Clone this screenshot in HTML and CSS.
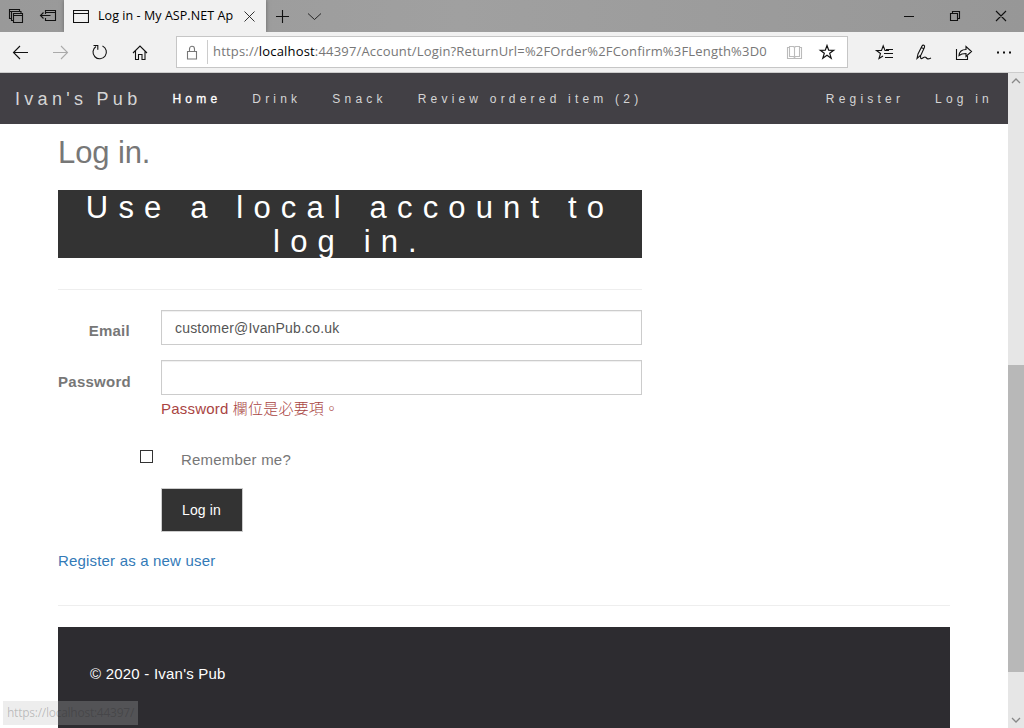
FILE: index.html
```html
<!DOCTYPE html>
<html lang="en">
<head>
<meta charset="utf-8">
<title>Log in - My ASP.NET Application</title>
<link rel="stylesheet" href="styles.css">
</head>
<body>
<div class="window">
  <header class="tabbar">
    <div class="tab-tools">
      <svg width="64" height="32" class="icon"><path d="M11.500 18.500h-2v-9h10v2M9.500 11.500h2M13.500 20.500h-2v-9h9.500v2M13.500 13.500h9v9h-9zM13.500 15.500h9M45.500 14v-3.500h10v10h-10V18M45.500 12.500h10M40.500 15.500h10M43.500 12.500l-3 3 3 3"/></svg>
    </div>
    <div class="tab">
      <svg width="16" height="16" class="icon"><path d="M.5 2.500h15v12H.5zM.5 5.500h15"/></svg>
      <span class="tab-title">Log in - My ASP.NET Ap</span>
      <svg width="11" height="11" class="icon thin"><path d="M.5.5l10 10M10.500.5l-10 10"/></svg>
    </div>
    <svg width="60" height="32" class="icon"><path d="M10 16.500h13M16.500 10v13"/><path class="thin" d="M42 13.500l6.500 6 6.500-6"/></svg>
    <svg width="124" height="32" class="icon controls"><path d="M4 16.500h10M50.500 13.500h7v7h-7zM52.500 13.500v-2h7v7h-2M96 11l10 10M106 11l-10 10"/></svg>
  </header>

  <div class="toolbar">
    <svg width="176" height="40" class="icon nav-icons">
      <path d="M13.500 20.500H28M20 14l-6.500 6.500L20 27"/>
      <path class="disabled" d="M53 20.500h14.500M61 14l6.500 6.500L61 27"/>
      <path d="M102.500 14a6.700 6.700 0 1 1-6.500.5M93.500 13.500h4.300v4.300"/>
      <path d="M133 21l7-7 7 7M135.500 19v8.500h3v-5h3.500v5h3V19"/>
    </svg>
    <div class="address">
      <svg width="30" height="24" class="icon lock"><path d="M10.500 11.500h9v7.500h-9zM12.500 11.500v-2.500a2.500 2.800 0 0 1 5 0v2.500"/></svg>
      <div class="url">https://<b>localhost</b>:44397/Account/Login?ReturnUrl=%2FOrder%2FConfirm%3FLength%3D0</div>
      <svg width="68" height="30" class="icon">
        <path class="reader" d="M9.500 10.500h-2v11h14v-11h-2M9.500 9.500h4l1 1 1-1h4v10h-4l-1 1-1-1h-4zM14.500 10.500v10"/>
        <path class="star" d="M47 8.500l1.700 4.700 5 .1-4 3 1.500 5-4.200-3-4.200 3 1.500-5-4-3 5-.1z"/>
      </svg>
    </div>
    <svg width="160" height="40" class="icon actions">
      <path d="M35 18.500h-4l-1.800-4.700-1.700 4.700h-5l4 3-1.500 5 4-2.500M32 17.500h7M30 21.500h9M31 25.500h8"/>
      <path d="M63 26.500l1-4.500 4-8c1-1.700 3.200-.7 2.500 1.200l-3.500 7.800zM67 15.500l2.500 1M66.500 23c.3 2-.5 4 1.500 3.500 2-.8 2.500-2.500 4-1s1.700 2 5 .5"/>
      <path d="M102.500 17v10.500h11V24M105 23.500c.5-4.500 3-6 7-6v-3l5.500 5-5.500 5v-3c-3 0-5 .3-7 2z"/>
      <path class="dots" d="M143 20.500h2M149 20.500h2M155 20.500h2"/>
    </svg>
  </div>

  <div class="viewport">
    <div class="page">
      <nav class="navbar">
        <a class="brand">Ivan's Pub</a>
        <a class="active">Home</a>
        <a>Drink</a>
        <a>Snack</a>
        <a>Review ordered item (2)</a>
        <a class="register">Register</a>
        <a>Log in</a>
      </nav>
      <main class="container">
        <h2>Log in.</h2>
        <form class="login-form">
          <h4>Use a local account to log in.</h4>
          <hr>
          <div class="field">
            <label for="email">Email</label>
            <input id="email" type="text" value="customer@IvanPub.co.uk">
          </div>
          <div class="field">
            <label for="password">Password</label>
            <input id="password" type="password">
          </div>
          <p class="error">Password <span>欄位是必要項。</span></p>
          <label class="remember"><input type="checkbox">Remember me?</label>
          <button type="button">Log in</button>
        </form>
        <a class="register-link">Register as a new user</a>
        <hr class="footer-rule">
        <footer>© 2020 - Ivan's Pub</footer>
      </main>
    </div>
    <div class="scrollbar">
      <svg width="16" height="16"><path d="M4 10l4-4 4 4"/></svg>
      <div class="thumb"></div>
      <svg width="16" height="16"><path d="M4 6l4 4 4-4"/></svg>
    </div>
  </div>
  <div class="status">https://localhost:44397/</div>
</div>
</body>
</html>
```
FILE: styles.css
```css
* { box-sizing: border-box; }
body { margin: 0; font-family: "Liberation Sans", Arial, sans-serif; }
.window { position: relative; width: 1024px; height: 728px; overflow: hidden; display: flex; flex-direction: column; background: #fff; }
svg { display: block; flex: none; }
.icon { fill: none; stroke: #111; stroke-width: 1.1; }
.icon.thin, .icon .thin { stroke-width: .85; }

/* Browser chrome */
.tabbar { height: 32px; flex: none; display: flex; background: linear-gradient(90deg, #999, #a0a0a0 45%, #979797); }
.tab { width: 202px; height: 32px; padding: 0 11px 0 9px; display: flex; align-items: center; background: #f1f1f1; box-shadow: 0 0 4px #666; }
.tab-title { width: 136px; margin: 0 11px 0 9px; white-space: nowrap; font: 12.5px/20px "Open Sans", sans-serif; letter-spacing: .06px; color: #000; }
.controls { margin-left: auto; }
.toolbar { height: 41px; flex: none; display: flex; align-items: flex-start; background: #f1f1f1; border-bottom: 1px solid #ccc; }
.icon .disabled { stroke: #aaa; }
.address { width: 672px; height: 32px; margin-top: 4px; display: flex; background: #fff; border: 1px solid #c6c6c6; }
.lock { width: 31px; border-right: 1px solid #ccc; margin-top: 3px; stroke: #777; }
.url { flex: none; width: 570px; padding-left: 5px; font: 13px/29px "Open Sans", sans-serif; letter-spacing: .18px; white-space: nowrap; color: #777; }
.url b { font-weight: 400; color: #000; }
.icon .reader { stroke: #bbb; }
.star { stroke-width: 1.2; }
.address svg:last-child { margin-left: 2px; margin-right: -4px; }
.actions { margin-left: 6px; width: 168px; }
.dots { stroke-width: 2; }

/* Web page */
.viewport { flex: 1; min-height: 0; display: flex; }
.page { width: 1008px; }
.navbar { height: 51px; padding: 0 15px 0 15px; display: flex; align-items: center; gap: 31px; background: #424045; }
.navbar a { font-size: 12px; letter-spacing: 4.2px; color: #d5d5d5; white-space: nowrap; }
.navbar .brand { font-size: 18px; letter-spacing: 4.3px; padding-top: 1px; }
.navbar .active { color: #fff; -webkit-text-stroke: .3px #fff; }
.navbar .register { margin-left: auto; }
.container { width: 892px; margin-left: 58px; padding-top: 11px; font-size: 15px; line-height: 21px; color: #777; }
h2 { margin: 0; height: 55px; font-size: 31px; line-height: 36px; font-weight: 400; letter-spacing: -.1px; }
.login-form { width: 584px; }
h4 { margin: 0; height: 68px; padding-top: 1px; font-size: 31px; line-height: 34px; font-weight: 400; letter-spacing: 10.15px; text-align: center; color: #fff; background: #333; }
hr { height: 1px; margin: 31px 0 20px; border: 0; background: #eee; }
.field { height: 35px; display: grid; grid-template-columns: 73px 481px; column-gap: 30px; margin-bottom: 15px; }
.field label { padding-top: 11px; text-align: right; font-weight: 700; letter-spacing: .27px; white-space: nowrap; }
.field:first-of-type label { padding: 10px 1px 0 0; }
.field input { width: 481px; height: 35px; padding: 6px 12px 5px 13px; border: 1px solid #ccc; outline: 0; color: #555; font: 14px "Liberation Sans", Arial, sans-serif; letter-spacing: .18px; box-shadow: inset 0 1px 1px #0001; }
.error { margin: -12px 0 0 103px; height: 21px; color: #a94442; white-space: nowrap; letter-spacing: .2px; }
.error span { font-family: "Noto Sans CJK TC", sans-serif; font-weight: 300; line-height: 20px; }
.remember { display: flex; height: 21px; margin: 30px 0 0 82px; letter-spacing: .2px; }
.remember input { appearance: none; width: 13px; height: 13px; margin: 1px 28px 0 0; border: 1px solid #333; background: #fff; }
button { display: block; width: 82px; height: 44px; margin: 18px 0 0 103px; padding: 0 1px 1px 0; background: #333; border: 1px solid #ccc; color: #fff; font: 14px "Liberation Sans", Arial, sans-serif; letter-spacing: .15px; }
.register-link { display: block; height: 21px; margin-top: 18px; color: #337ab7; letter-spacing: .18px; }
.footer-rule { margin: 34px 0 21px; }
footer { height: 101px; padding: 36px 32px; background: #2d2c30; color: #fff; letter-spacing: .22px; }
.scrollbar { width: 16px; background: #e6e6e6; display: flex; flex-direction: column; }
.scrollbar path { fill: none; stroke: #888; stroke-width: 1.3; }
.thumb { height: 307px; margin: 276px 0 40px; background: #b8b8b8; }
.status { position: absolute; left: 3px; top: 701px; width: 135px; height: 24px; padding-left: 4px; font: 12px/24px "Open Sans", sans-serif; letter-spacing: -.25px; color: rgba(34, 34, 34, .25); background: rgba(190, 190, 190, .27); white-space: nowrap; }
```
